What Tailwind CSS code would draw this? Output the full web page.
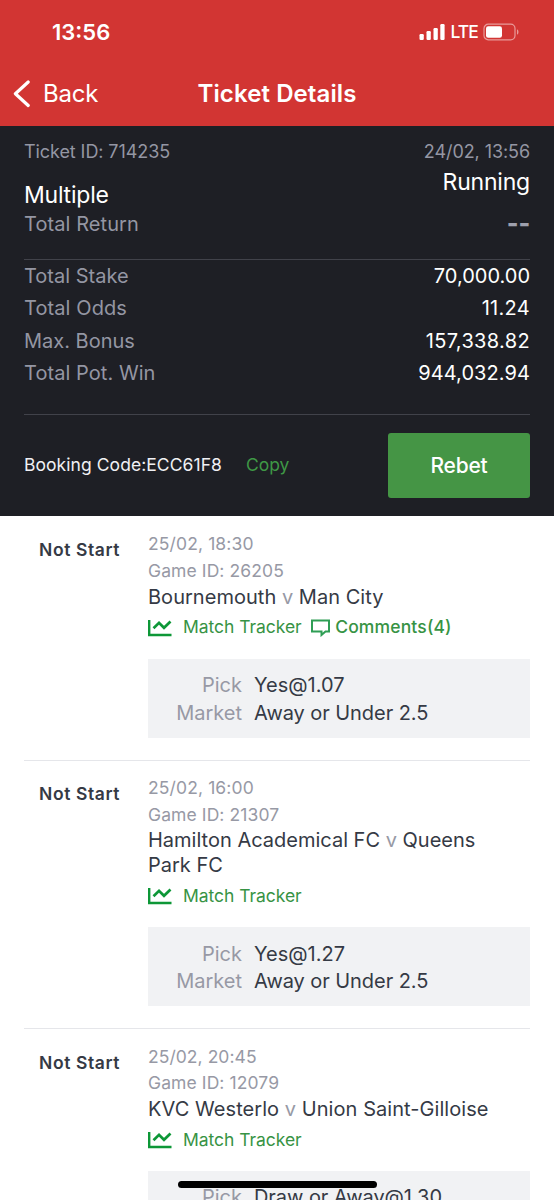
<!DOCTYPE html>
<html lang="en">
<head>
<meta charset="utf-8">
<title>Ticket Details</title>
<script src="https://cdn.jsdelivr.net/npm/@tailwindcss/browser@4"></script>
</head>
<body class="h-[1200px] w-[554px] overflow-hidden bg-white font-['Inter',sans-serif] text-[#353a45]">
<svg class="hidden">
  <symbol id="chart" viewBox="0 0 24 18"><path d="M1.2 1V16H23.5" fill="none" stroke="#0d9737" stroke-width="2.4"/><path d="M5.5 9.2L11 3.8L16 8.8L22.5 2.5" fill="none" stroke="#0d9737" stroke-width="2.7"/></symbol>
</svg>
<header class="h-[125.5px] bg-[#d23533] text-white">
  <div class="flex h-[63px] items-center justify-between pl-[52px] pr-[35px]">
    <span class="text-[22px] font-semibold leading-[30px]">13:56</span>
    <div class="flex items-center">
      <svg class="h-4 w-[26px]" viewBox="0 0 26 16" fill="#fff"><rect x="0.5" y="10" width="4.3" height="6" rx="1.2"/><rect x="7.5" y="7" width="4.3" height="9" rx="1.2"/><rect x="14.5" y="4" width="4.3" height="12" rx="1.2"/><rect x="21.3" y="0" width="4.3" height="16" rx="1.2"/></svg>
      <span class="ml-[5.5px] w-[27px] text-[17.5px] font-medium leading-[30px] tracking-[-0.9px]">LTE</span>
      <svg class="ml-[5.5px] h-[18px] w-[36px]" viewBox="0 0 36 18"><rect x="1" y="1.2" width="31" height="15.6" rx="4.3" fill="none" stroke="#fff" stroke-opacity=".5" stroke-width="1.2"/><rect x="3" y="3.2" width="16" height="11.6" rx="2.2" fill="#fff"/><path d="M34 6.3q1.5 .7 1.5 2.7t-1.5 2.7z" fill="#fff" fill-opacity=".5"/></svg>
    </div>
  </div>
  <div class="grid h-[61px] grid-cols-[1fr_auto_1fr] items-center">
    <div class="flex items-center pl-[12px]">
      <svg class="h-[30px] w-[18px]" viewBox="0 0 18 30"><path d="M16.2 3L3.4 14.7L16.2 26.5" fill="none" stroke="#fff" stroke-width="3.2" stroke-linecap="round" stroke-linejoin="round"/></svg>
      <span class="ml-[13px] text-[24px] leading-[30px] tracking-[-0.2px]">Back</span>
    </div>
    <h1 class="text-[24px] font-semibold leading-[30px] tracking-[0.1px]">Ticket Details</h1>
  </div>
</header>
<section class="h-[390px] bg-[#1e1f25] px-6 pt-[11px] text-[#9496a3]">
  <div class="flex h-[30px] items-center justify-between text-[18px] tracking-[-0.08px]"><span>Ticket ID: 714235</span><span>24/02, 13:56</span></div>
  <div class="flex h-[93px] justify-between border-b border-[#41424a]">
    <div><div class="mt-[13px] text-[23px] leading-[30px] tracking-[-0.22px] text-white">Multiple</div><div class="text-[20px] leading-[28px] tracking-[0.08px]">Total Return</div></div>
    <div class="flex flex-col items-end"><div class="text-[23px] leading-[31px] tracking-[-0.2px] text-white">Running</div>
      <div class="mt-[5px] text-[25px] font-extrabold leading-[40px] tracking-[-0.2px] text-[#9ea0ad]">--</div></div>
  </div>
  <div class="h-[155px] border-b border-[#41424a] text-[20px] leading-[32.5px]">
    <div class="flex justify-between"><span>Total Stake</span><span class="text-white">70,000.00</span></div>
    <div class="flex justify-between"><span class="tracking-[0.1px]">Total Odds</span><span class="tracking-[0.3px] text-white">11.24</span></div>
    <div class="flex justify-between"><span>Max. Bonus</span><span class="tracking-[0.35px] text-white">157,338.82</span></div>
    <div class="flex justify-between"><span class="tracking-[0.06px]">Total Pot. Win</span><span class="tracking-[0.08px] text-white">944,032.94</span></div>
  </div>
  <div class="flex h-[101px] items-center text-[17.5px]">
    <span class="tracking-[0.06px] text-[#f0f0f4]">Booking Code:ECC61F8</span><span class="ml-[24px] text-[#3f9845]">Copy</span>
    <button class="ml-auto h-[65px] w-[142px] rounded-[3px] bg-[#459545] pt-px text-[21px] font-medium tracking-[-0.2px] text-white">Rebet</button>
  </div>
</section>
<main class="px-6">
  <article class="flex h-[245px] border-b border-[#e5e6ea] pt-[15.5px]">
    <div class="w-[124px] pl-[15px] pt-[5px] text-[17.5px] font-semibold leading-[27px] tracking-[0.6px]">Not Start</div>
    <div class="flex-1">
      <div class="text-[17.5px] leading-[26.5px] text-[#9799a5]"><span class="tracking-[0.12px]">25/02, 18:30</span><br><span class="tracking-[0.1px]">Game ID: 26205</span></div>
      <div class="mt-[0.5px] text-[20px] leading-[24.5px] tracking-[0.03px]">Bournemouth <span class="text-[#9799a5]">v</span> Man City</div>
      <div class="mt-[5.5px] flex h-[26px] items-center text-[17.5px] text-[#379344]"><svg class="mr-[11px] h-[18px] w-6"><use href="#chart"/></svg><span class="tracking-[-0.04px]">Match Tracker</span>
        <svg class="ml-[9px] h-[18px] w-[19px]" viewBox="0 0 19 18"><path d="M1 1.5H18V12.5H14.5L10.5 16V12.5H1Z" fill="none" stroke="#2f9e55" stroke-width="2"/></svg><span class="ml-[5.5px] font-medium tracking-[0.15px]">Comments(4)</span></div>
      <div class="mt-[18.5px] grid h-[78.5px] grid-cols-[94px_1fr] content-start gap-x-3 bg-[#f1f2f4] pt-[13px] text-[20px] leading-[27.5px]"><span class="text-right text-[#9799a5]">Pick</span><span>Yes@1.07</span><span class="text-right text-[#9799a5]">Market</span><span class="tracking-[-0.06px]">Away or Under 2.5</span></div>
    </div>
  </article>
  <article class="flex h-[268.5px] border-b border-[#e5e6ea] pt-[14.5px]">
    <div class="w-[124px] pl-[15px] pt-[5px] text-[17.5px] font-semibold leading-[27px] tracking-[0.6px]">Not Start</div>
    <div class="flex-1">
      <div class="text-[17.5px] leading-[26.5px] text-[#9799a5]"><span class="tracking-[0.12px]">25/02, 16:00</span><br><span class="tracking-[0.1px]">Game ID: 21307</span></div>
      <div class="text-[20px] leading-[24.5px]">Hamilton Academical FC <span class="text-[#9799a5]">v</span> Queens<br>Park FC</div>
      <div class="mt-[6px] flex h-[26px] items-center text-[17.5px] text-[#379344]"><svg class="mr-[11px] h-[18px] w-6"><use href="#chart"/></svg><span class="tracking-[-0.04px]">Match Tracker</span></div>
      <div class="mt-[18px] grid h-[78.5px] grid-cols-[94px_1fr] content-start gap-x-3 bg-[#f1f2f4] pt-[13.5px] text-[20px] leading-[27.5px]"><span class="text-right text-[#9799a5]">Pick</span><span>Yes@1.27</span><span class="text-right text-[#9799a5]">Market</span><span class="tracking-[-0.06px]">Away or Under 2.5</span></div>
    </div>
  </article>
  <article class="flex h-[171px] overflow-hidden pt-[14.5px]">
    <div class="w-[124px] pl-[15px] pt-[5px] text-[17.5px] font-semibold leading-[27px] tracking-[0.6px]">Not Start</div>
    <div class="flex-1">
      <div class="text-[17.5px] leading-[26.5px] text-[#9799a5]"><span class="tracking-[0.05px]">25/02, 20:45</span><br><span class="tracking-[0.1px]">Game ID: 12079</span></div>
      <div class="text-[20px] leading-[24.5px] tracking-[0.06px]">KVC Westerlo <span class="text-[#9799a5]">v</span> Union Saint-Gilloise</div>
      <div class="mt-[6px] flex h-[26px] items-center text-[17.5px] text-[#379344]"><svg class="mr-[11px] h-[18px] w-6"><use href="#chart"/></svg><span class="tracking-[-0.04px]">Match Tracker</span></div>
      <div class="mt-[18px] grid h-[78.5px] grid-cols-[94px_1fr] content-start gap-x-3 bg-[#f1f2f4] pt-[13px] text-[20px] leading-[27.5px]"><span class="text-right text-[#9799a5]">Pick</span><span class="tracking-[-0.06px]">Draw or Away@1.30</span></div>
    </div>
  </article>
</main>
<div class="fixed left-[178px] top-[1180.5px] h-[7px] w-[199px] rounded-full bg-black"></div>
</body>
</html>
